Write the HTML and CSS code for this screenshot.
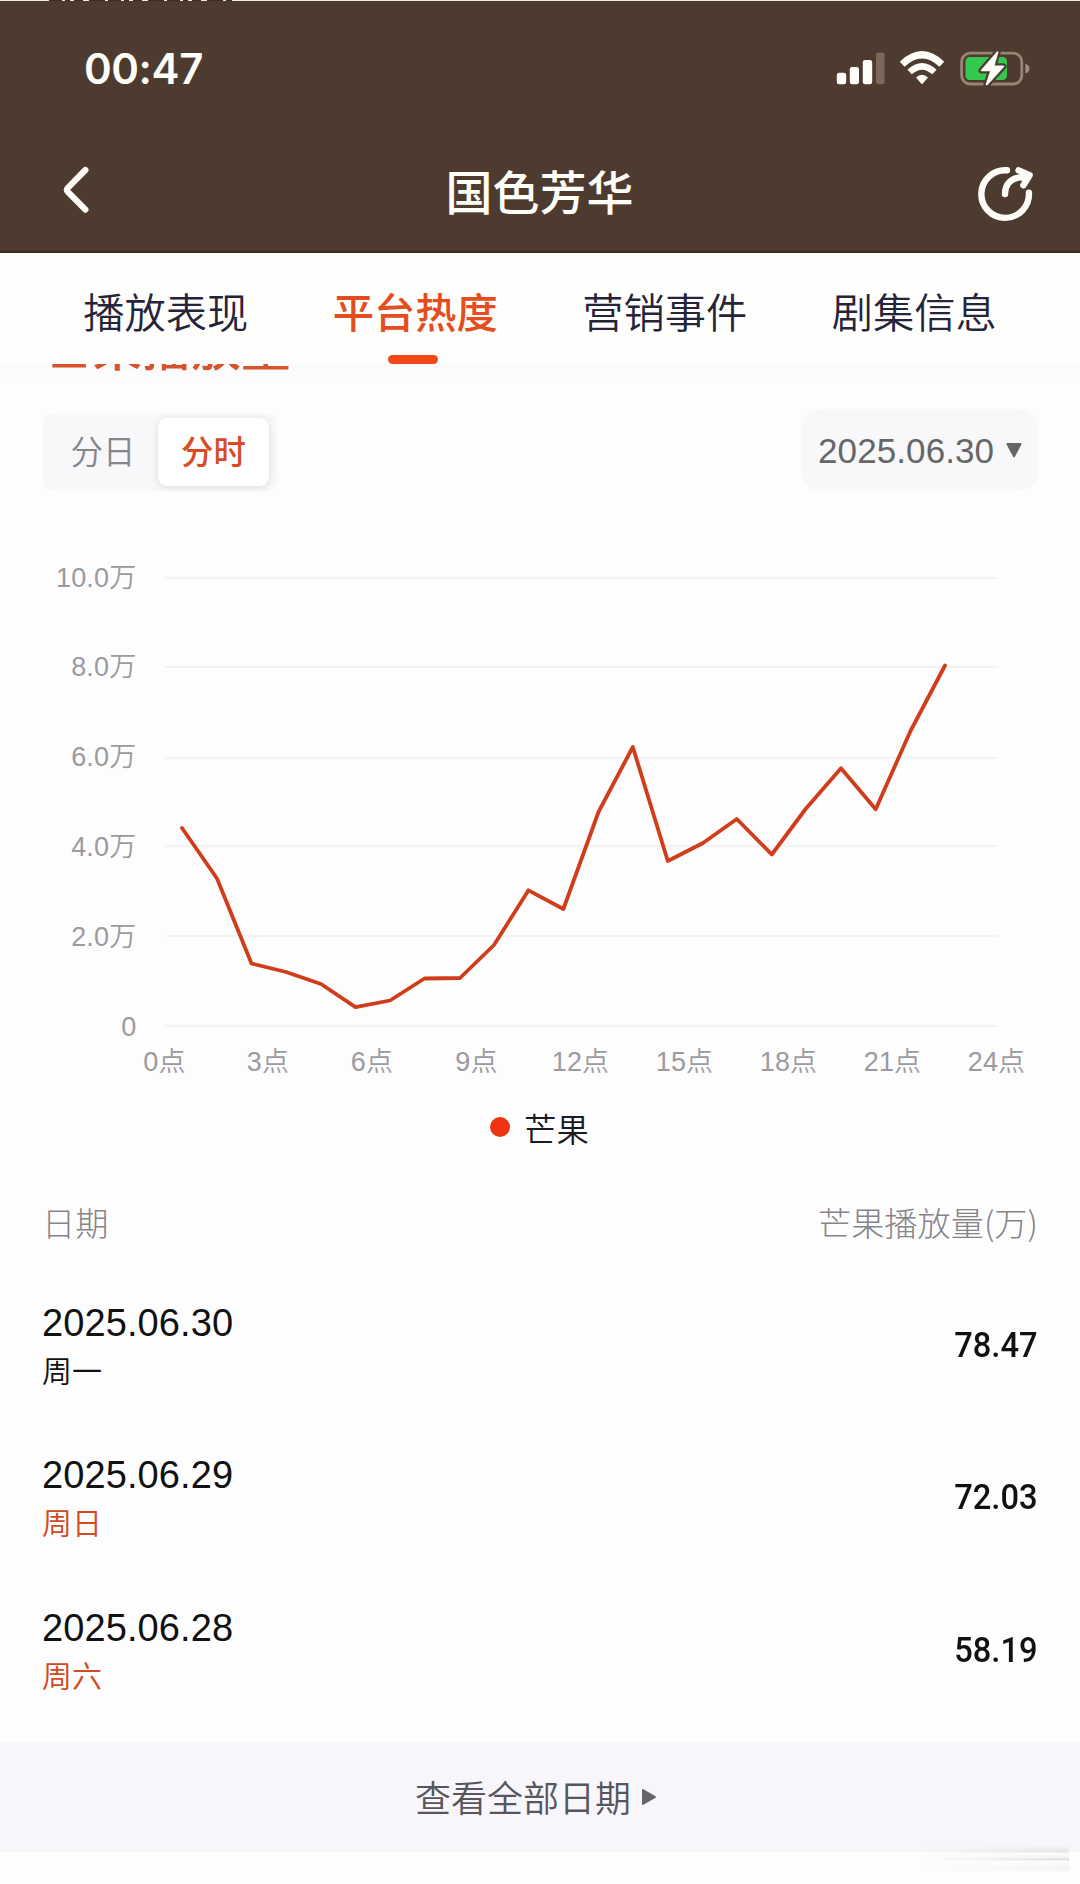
FILE: index.html
```html
<!DOCTYPE html>
<html lang="zh-CN">

<head>
    <meta charset="UTF-8">
    <meta name="viewport" content="width=device-width, initial-scale=1.0">
    <title>国色芳华</title>
    <link rel="stylesheet" href="styles.css">
</head>

<body>
    <!-- Header -->
    <header class="header">
        <svg class="top-edge" width="1080" height="2" viewBox="0 0 1080 2">
            <path d="M0 .5H1080" stroke="#f3ead6" />
            <path d="M49 .5H232" stroke="#3a2e22" stroke-dasharray="13 3 5 4 9 6 16 3" />
        </svg>
        <div class="status-bar">
            <span class="time">00:47</span>
            <svg class="status-icons" width="196" height="38" viewBox="836 49 196 38">
                <!-- signal -->
                <g fill="#fffdf8">
                    <rect x="836.8" y="72.7" width="9.4" height="11.6" rx="2.4" />
                    <rect x="849.8" y="67" width="9.2" height="17.3" rx="2.4" />
                    <rect x="862.8" y="60" width="9.4" height="24.3" rx="2.4" />
                    <rect x="876" y="52.5" width="8.6" height="31.8" rx="2.4" fill="#7b675b" />
                </g>
                <!-- wifi -->
                <g fill="none" stroke="#fffdf8">
                    <path d="M902.2 64.2Q922 45.4 941.8 64.2" stroke-width="7" />
                    <path d="M909.6 72Q922 60.6 934.4 72" stroke-width="6.4" />
                </g>
                <path d="M916 77.4Q922 72 928 77.4L922.8 83.6Q922 84.4 921.2 83.6Z" fill="#fffdf8" />
                <!-- battery -->
                <rect x="961.6" y="53.2" width="60.2" height="30.8" rx="8.5" fill="none" stroke="#9a8476" stroke-width="2.8" />
                <path d="M1025.3 63.5Q1029.5 65 1029.5 68.5T1025.3 73.5Z" fill="#a38d7e" />
                <rect x="965.5" y="57" width="41.5" height="23" rx="4.5" fill="#35c84f" />
                <path d="M997 51.5L980.8 70.2Q980.4 71.3 981.6 71.3H990L985.6 84.6Q986.6 86 988 84.6L1004.2 66.8Q1004.6 65.6 1003.2 65.4H994.6L998.4 52.4Q998 50.6 997 51.5Z" fill="#fffdf8" stroke="#4d3b2f" stroke-width="4.5" paint-order="stroke" />
            </svg>
        </div>
        <div class="nav-bar">
            <svg width="60" height="60" viewBox="47 162 60 60">
                <path d="M85.4 170L67.6 188.2Q66.2 189.9 67.6 191.6L85.4 209.6" fill="none" stroke="#fffdf8" stroke-width="6.2" stroke-linecap="round" stroke-linejoin="round" />
            </svg>
            <h1>国色芳华</h1>
            <svg width="60" height="60" viewBox="975 162 60 60">
                <g fill="none" stroke="#fffdf8" stroke-width="6.4" stroke-linecap="round" stroke-linejoin="round">
                    <path d="M1007 170.3A23.8 23.8 0 1 0 1028.9 192.6" />
                    <path d="M1005 194C1005 184.5 1010.5 178.2 1021 177.4" />
                    <path d="M1018.6 170.4L1029.6 175.2L1023.4 185.2" />
                    <path d="M1020 173.5L1029 175.4L1023.6 183Z" fill="#fffdf8" stroke-width="2" />
                </g>
            </svg>
        </div>
    </header>

    <!-- Tabs -->
    <nav class="tabs">
        <a class="tab">播放表现</a>
        <a class="tab active">平台热度</a>
        <a class="tab">营销事件</a>
        <a class="tab">剧集信息</a>
    </nav>

    <main class="content">
        <!-- Heading scrolled under the tabs -->
        <div class="scrolled-title">
            <h2>芒果播放量</h2>
        </div>

        <div class="filters">
            <div class="segment">
                <span class="segment-item">分日</span>
                <span class="segment-item selected">分时</span>
            </div>
            <div class="date-picker">
                <span>2025.06.30</span>
                <svg width="16" height="15" viewBox="0 0 16 15">
                    <path d="M1.5 1H14.5L8 13.4Z" fill="#666" stroke="#666" stroke-width="2" stroke-linejoin="round" />
                </svg>
            </div>
        </div>

        <!-- Hourly chart -->
        <svg class="chart" width="1080" height="560" viewBox="0 540 1080 560">
            <g class="grid">
                <path d="M165 578H998M165 667H998M165 758H998M165 846H998M165 936H998M165 1026H998" />
            </g>
            <g class="y-labels">
                <text x="136.5" y="586.5">10.0万</text>
                <text x="136.5" y="676">8.0万</text>
                <text x="136.5" y="766">6.0万</text>
                <text x="136.5" y="855.5">4.0万</text>
                <text x="136.5" y="945.5">2.0万</text>
                <text x="136.5" y="1035.5">0</text>
            </g>
            <g class="x-labels">
                <text x="164.5" y="1071">0点</text>
                <text x="268" y="1071">3点</text>
                <text x="372" y="1071">6点</text>
                <text x="476.5" y="1071">9点</text>
                <text x="580.5" y="1071">12点</text>
                <text x="684.5" y="1071">15点</text>
                <text x="788.5" y="1071">18点</text>
                <text x="892.5" y="1071">21点</text>
                <text x="996.5" y="1071">24点</text>
            </g>
            <polyline class="line" points="182,828 217,878.5 251.5,963.5 286,972 321,984 355.5,1007.2 390,1000.5 424.5,978.5 460,978 494,945 528.5,890.3 563.4,909 598.5,812 632.8,747 667.8,861 703,843 736.8,819 771.8,854.5 806,808.5 841,768.3 875.7,809.2 910.5,731 945,665.5" />
        </svg>

        <div class="legend">
            <span class="dot"></span>
            <span>芒果</span>
        </div>

        <!-- Daily table -->
        <div class="table">
            <div class="table-head">
                <span>日期</span>
                <span>芒果播放量(万)</span>
            </div>
            <div class="row">
                <div>
                    <p class="date">2025.06.30</p>
                    <p class="day">周一</p>
                </div>
                <span class="value">78.47</span>
            </div>
            <div class="row">
                <div>
                    <p class="date">2025.06.29</p>
                    <p class="day weekend">周日</p>
                </div>
                <span class="value">72.03</span>
            </div>
            <div class="row">
                <div>
                    <p class="date">2025.06.28</p>
                    <p class="day weekend">周六</p>
                </div>
                <span class="value">58.19</span>
            </div>
        </div>
    </main>

    <footer class="view-all">
        <span>查看全部日期</span>
        <svg width="16" height="18" viewBox="0 0 16 18">
            <path d="M2 2V16L14 9Z" fill="#66656b" stroke="#66656b" stroke-width="2" stroke-linejoin="round" />
        </svg>
    </footer>
    <div class="corner-shade"></div>
</body>

</html>
```
FILE: styles.css
```css
* {
    box-sizing: border-box;
}

body {
    position: relative;
    margin: 0;
    width: 1080px;
    height: 1884px;
    overflow: hidden;
    background-color: #fefdfe;
    font-family: "Liberation Sans", "Noto Sans CJK SC", sans-serif;
    color: #111;
}

svg {
    display: block;
}

h1,
h2,
p {
    margin: 0;
}

.header {
    height: 253px;
    background-color: #4d3b2f;
    border-bottom: 2px solid #3b2d24;
}

.status-bar {
    display: flex;
    justify-content: space-between;
    align-items: center;
    height: 96px;
    padding: 0 48px 0 84px;
    margin-top: -2px;
}

.time {
    padding-top: 41px;
    height: 96px;
    line-height: 56px;
    font-family: Inter, sans-serif;
    font-size: 42px;
    font-weight: 600;
    letter-spacing: -0.4px;
    color: #fffdf8;
}

.status-icons {
    margin-top: 40px;
}

.nav-bar {
    display: flex;
    justify-content: space-between;
    align-items: center;
    height: 60px;
    margin-top: 66px;
    padding: 0 45px 0 47px;
}

.nav-bar h1 {
    font-family: "Noto Sans CJK SC", sans-serif;
    font-size: 47px;
    line-height: 56px;
    height: 60px;
    margin-right: 3px;
    font-weight: 500;
    color: #fffdf8;
}

.tabs {
    display: grid;
    grid-template-columns: repeat(4, 1fr);
    height: 111px;
    padding: 0 41px;
    background-color: #fefffd;
}

.tab {
    display: flex;
    flex-direction: column;
    align-items: center;
    padding-top: 26px;
    font-family: "Noto Sans CJK SC", sans-serif;
    font-size: 41.3px;
    line-height: 62px;
    font-weight: 350;
    color: #26243a;
}

.tab.active {
    font-weight: 500;
    color: #e44d20;
}

.tab.active::after {
    content: "";
    width: 50px;
    height: 9px;
    margin-top: 14px;
    margin-right: 4px;
    border-radius: 5px;
    background-color: #f04816;
}

.scrolled-title {
    display: flex;
    align-items: flex-end;
    height: 16px;
    padding-left: 43px;
    overflow: hidden;
    background: linear-gradient(#fafafb, #fefdfe);
}

.scrolled-title h2 {
    font-family: "Noto Sans CJK SC", sans-serif;
    font-size: 49.5px;
    line-height: 70px;
    font-weight: 500;
    color: #d8532c;
}

.filters {
    display: flex;
    justify-content: space-between;
    padding: 29px 42px 0 43px;
    height: 160px;
}

.segment {
    display: flex;
    width: 234px;
    height: 78px;
    margin-top: 4px;
    padding: 5px 8px 5px 5px;
    border-radius: 10px;
    background-color: #f8f7f9;
}

.segment-item {
    width: 110px;
    height: 68px;
    line-height: 64px;
    text-align: center;
    font-family: "Noto Sans CJK SC", sans-serif;
    font-size: 32.4px;
    font-weight: 350;
    color: #87868a;
}

.segment-item.selected {
    width: 111px;
    border-radius: 9px;
    background-color: #fff;
    box-shadow: 0 1px 7px rgba(0, 0, 0, 0.12);
    font-weight: 500;
    color: #d84c25;
}

.date-picker {
    display: flex;
    align-items: center;
    justify-content: space-between;
    width: 237px;
    height: 82px;
    padding: 1px 16px 0 17px;
    border-radius: 20px;
    background-color: #f8f7fa;
    font-size: 35px;
    letter-spacing: 0.1px;
    color: #666;
}

.grid path {
    stroke: #f3f2f5;
    stroke-width: 2;
}

.y-labels,
.x-labels {
    font-size: 27px;
    font-weight: 350;
    letter-spacing: 0.2px;
    fill: #9b9a9f;
}

.y-labels {
    text-anchor: end;
}

.x-labels {
    text-anchor: middle;
}

.line {
    fill: none;
    stroke: #cf3d1b;
    stroke-width: 3.8;
    stroke-linecap: round;
    stroke-linejoin: round;
}

.legend {
    display: flex;
    justify-content: center;
    align-items: center;
    gap: 14px;
    height: 54px;
    padding-right: 1px;
    font-family: "Noto Sans CJK SC", sans-serif;
    font-size: 32.4px;
    font-weight: 350;
    color: #1b1a1e;
}

.dot {
    width: 20px;
    height: 20px;
    border-radius: 50%;
    background-color: #ee3411;
}

.table {
    padding: 0 42px;
}

.table-head {
    display: flex;
    justify-content: space-between;
    height: 129px;
    padding-top: 43px;
    font-family: "Noto Sans CJK SC", sans-serif;
    font-size: 33.2px;
    line-height: 50px;
    font-weight: 300;
    color: #858488;
}

.row {
    display: flex;
    justify-content: space-between;
    height: 152.4px;
    padding-top: 18px;
}

.date {
    font-size: 38px;
    line-height: 44px;
    letter-spacing: 0.1px;
}

.day {
    margin-top: 2px;
    font-family: "Noto Sans CJK SC", sans-serif;
    font-size: 30px;
    line-height: 44px;
    font-weight: 350;
}

.weekend {
    color: #d04a22;
}

.value {
    font-family: Roboto, sans-serif;
    font-size: 35.5px;
    font-weight: 500;
    line-height: 44px;
    margin-top: 22px;
    transform: scaleX(0.92);
    transform-origin: right;
}

.view-all {
    display: flex;
    justify-content: center;
    align-items: center;
    gap: 10px;
    height: 110px;
    margin-top: 2px;
    padding-right: 8px;
    padding-bottom: 2px;
    background-color: #f8f6fa;
    font-family: "Noto Sans CJK SC", sans-serif;
    font-size: 36px;
    line-height: 50px;
    font-weight: 350;
    color: #57565c;
}

.view-all svg {
    margin-top: 2px;
}

/* faint streaks in the bottom right corner */
.corner-shade {
    position: absolute;
    right: 11px;
    bottom: 12px;
    width: 150px;
    height: 26px;
    background: linear-gradient(#f6f4f7, #e4e3e4 22%, #fcfbfc 28%, #f6f5f6 42%, #dfdede 52%, #fcfbfc 58%, #f4f3f4 90%, #fdfcfd);
    -webkit-mask-image: linear-gradient(to right, transparent, #000);
    mask-image: linear-gradient(to right, transparent, #000);
}
```
